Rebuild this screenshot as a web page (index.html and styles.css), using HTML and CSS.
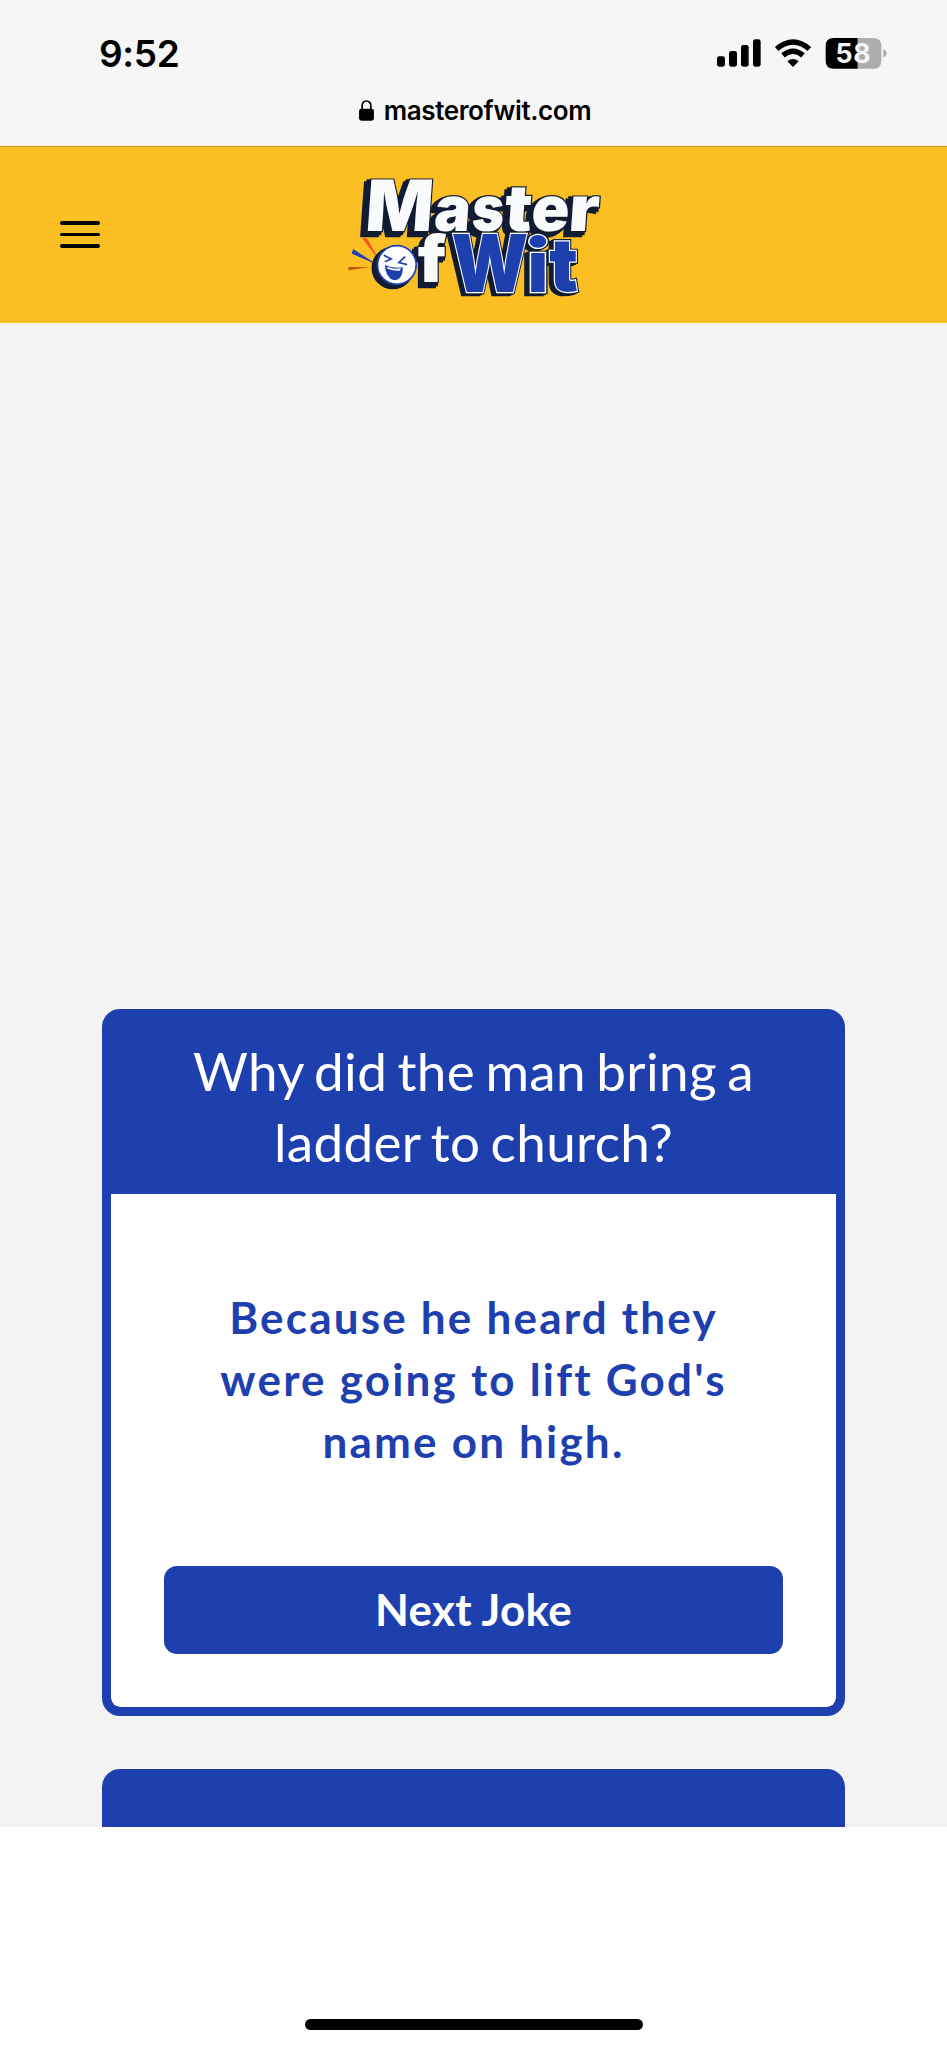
FILE: index.html
```html
<!DOCTYPE html>
<html lang="en">

<head>
    <meta charset="UTF-8">
    <meta name="viewport" content="width=device-width, initial-scale=1.0">
    <title>Master of Wit</title>
    <link rel="stylesheet" href="styles.css">
</head>

<body>
    <div class="browser-bar">
        <div class="status-row">
            <div class="clock">9:52</div>
            <svg class="status-icons" viewBox="0 0 510 96">
                <!-- signal -->
                <rect x="0" y="55" width="24" height="31" rx="7" />
                <rect x="36" y="39" width="24" height="47" rx="7" />
                <rect x="72" y="21" width="23" height="65" rx="7" />
                <rect x="108" y="4" width="23" height="82" rx="7" />
                <!-- wifi -->
                <g fill="none" stroke="#000" stroke-width="16">
                    <path d="M179 33 Q228 -9 277 33" />
                    <path d="M198 52 Q228 27 258 52" />
                </g>
                <path d="M211 70 Q228 56 245 70 L228 87 Z" />
                <!-- battery -->
                <path fill="#adadad" d="M422 0 H469 Q493 0 493 24 V68 Q493 92 469 92 H422 Z" />
                <path d="M422 0 H350 Q326 0 326 24 V68 Q326 92 350 92 H422 Z" />
                <path fill="#adadad" d="M499 34 Q509 37 509 46 Q509 55 499 58 Z" />
                <text class="battery-level" x="408" y="75" textLength="105">58</text>
            </svg>
        </div>
        <div class="address">
            <svg class="lock" viewBox="0 0 44 62">
                <path d="M9 30 V19 Q9 3 22 3 Q35 3 35 19 V30" fill="none" stroke="#000" stroke-width="5" />
                <rect x="0" y="26" width="44" height="35" rx="7" />
            </svg>
            <span>masterofwit.com</span>
        </div>
    </div>

    <header class="header">
        <button class="menu-btn" aria-label="Menu">
            <span class="menu-line"></span>
            <span class="menu-line"></span>
            <span class="menu-line"></span>
        </button>
        <svg class="logo" viewBox="-4.5 0 870 450">
            <defs>
                <g id="master" class="logo-text" transform="translate(11 0) skewX(-4)">
                    <text x="105" y="199" font-size="212" textLength="202" lengthAdjust="spacingAndGlyphs">M</text>
                    <text x="311" y="199" font-size="189" textLength="109" lengthAdjust="spacingAndGlyphs">a</text>
                    <text x="424" y="199" font-size="189" textLength="97" lengthAdjust="spacingAndGlyphs">s</text>
                    <text x="522" y="199" font-size="193" textLength="82" lengthAdjust="spacingAndGlyphs">t</text>
                    <text x="602" y="199" font-size="189" textLength="114" lengthAdjust="spacingAndGlyphs">e</text>
                    <text x="714" y="199" font-size="189" textLength="92" lengthAdjust="spacingAndGlyphs">r</text>
                </g>
                <g id="eff" class="logo-text">
                    <text x="262" y="350" font-size="195" textLength="86" lengthAdjust="spacingAndGlyphs">f</text>
                </g>
                <g id="wit" class="logo-text">
                    <text x="363" y="380" font-size="238" textLength="230" lengthAdjust="spacingAndGlyphs">W</text>
                    <text class="round-dot" x="584" y="380" font-size="226" textLength="76" lengthAdjust="spacingAndGlyphs">i</text>
                    <text x="656" y="377" font-size="222" textLength="86" lengthAdjust="spacingAndGlyphs">t</text>
                </g>
            </defs>

            <g class="shadow" aria-hidden="true">
                <use href="#master" x="-16" y="10" />
                <use href="#master" x="-8" y="5" />
                <use href="#eff" x="-12" y="12" />
                <use href="#eff" x="-6" y="6" />
            </g>
            <g class="white"><use href="#master" /><use href="#eff" /></g>
            <g class="shadow" aria-hidden="true">
                <use href="#wit" x="-12" y="8" />
                <use href="#wit" x="-6" y="4" />
                <use href="#wit" />
            </g>
            <g class="white-edge" aria-hidden="true"><use href="#wit" /></g>
            <g class="blue"><use href="#wit" /></g>

            <!-- laughing face -->
            <path d="M97 220 L109 222 L136 271 Z" fill="#f4511e" stroke="#f4511e" stroke-width="3" />
            <path d="M69 254 L65 265 L125 291 Z" fill="#1e40af" stroke="#1e40af" stroke-width="3" />
            <path d="M53 306 L119 306 L54 316 Z" fill="#c2570c" />
            <circle cx="187" cy="309" r="64" fill="#111c33" />
            <circle cx="199" cy="300" r="58" fill="#fff" stroke="#1e40af" stroke-width="5" />
            <g fill="none" stroke="#1e40af" stroke-width="5">
                <path d="M160 271 L182 282 L163 290" />
                <path d="M224 275 L205 293 L230 299" />
            </g>
            <path d="M163 300 Q190 312 217 307 Q217 345 191 346 Q166 340 163 300 Z" fill="#1e40af" />
            <path d="M170 305 Q190 314 211 310 L208 317 Q188 318 171 311 Z" fill="#fff" />
        </svg>
    </header>

    <main class="page">
        <div class="joke-card">
            <h2 class="question">Why did the man bring a ladder to church?</h2>
            <div class="joke-body">
                <p class="answer">Because he heard they were going to lift God's name on high.</p>
                <button class="next-btn">Next Joke</button>
            </div>
        </div>
        <div class="joke-card"></div>
    </main>

    <footer class="bottom-bar">
        <div class="home-indicator"></div>
    </footer>
</body>

</html>
```
FILE: styles.css
```css
* {
    margin: 0;
    padding: 0;
    box-sizing: border-box;
}

body {
    width: 947px;
    height: 2048px;
    display: flex;
    flex-direction: column;
    background: #fff;
    font-family: Lato, sans-serif;
    overflow: hidden;
}

.browser-bar {
    height: 147px;
    background: #f6f6f6;
    border-bottom: 1px solid #c4973a;
    font-family: Inter, sans-serif;
    color: #000;
}

.status-row {
    display: flex;
    justify-content: space-between;
    align-items: flex-start;
    height: 92px;
    padding: 32px 60px 0 99px;
}

.clock {
    font-size: 37px;
    font-weight: 600;
    line-height: 44px;
    letter-spacing: -0.3px;
}

.status-icons {
    width: 170px;
    height: 32px;
    margin-top: 6px;
}

.battery-level {
    font-size: 80px;
    font-weight: 700;
    fill: #f6f6f6;
    text-anchor: middle;
}

.address {
    display: flex;
    justify-content: center;
    align-items: center;
    gap: 10px;
    height: 36px;
    padding-left: 3px;
    font-size: 26px;
    font-weight: 600;
    letter-spacing: -0.4px;
}

.lock {
    width: 15px;
    height: 21px;
}

.header {
    display: grid;
    grid-template-columns: 1fr 290px 1fr;
    align-items: start;
    height: 176px;
    padding: 18px 60px 0;
    background: #fbbf24;
}

.menu-btn {
    display: flex;
    flex-direction: column;
    gap: 8px;
    width: 40px;
    margin-top: 56px;
    background: none;
    border: none;
}

.menu-line {
    width: 40px;
    height: 3.6px;
    border-radius: 2px;
    background: #000;
}

.logo {
    width: 290px;
    height: 150px;
}

.logo-text {
    font-family: Inter, sans-serif;
    font-weight: 900;
}

.round-dot {
    font-family: Lato, sans-serif;
}

.shadow {
    fill: #111c33;
    stroke: #111c33;
    stroke-width: 14px;
}

.white {
    fill: #f9fafb;
    stroke: #111c33;
    stroke-width: 7px;
    paint-order: stroke;
}

.white-edge {
    fill: #fff;
    stroke: #fff;
    stroke-width: 7px;
}

.blue {
    fill: #1e40af;
}

.page {
    display: flex;
    flex-direction: column;
    align-items: center;
    gap: 53px;
    height: 1504px;
    padding-top: 685.5px;
    background: #f3f3f3;
    overflow: hidden;
}

.joke-card {
    flex: none;
    width: 743px;
    min-height: 200px;
    background: #1e40af;
    border: 9px solid #1e40af;
    border-radius: 18px;
    overflow: hidden;
}

.question {
    padding: 17px 60px;
    font-size: 53px;
    font-weight: 400;
    line-height: 71px;
    letter-spacing: 0.35px;
    word-spacing: -3.6px;
    text-align: center;
    color: #fff;
}

.joke-body {
    display: flex;
    flex-direction: column;
    gap: 94px;
    height: 513px;
    padding: 92px 53px 53px;
    background: #fff;
    border-radius: 0 0 9px 9px;
}

.answer {
    padding: 0 35px;
    font-size: 44px;
    font-weight: 700;
    line-height: 62px;
    letter-spacing: 2.2px;
    text-align: center;
    color: #1e40af;
}

.next-btn {
    flex: none;
    height: 88px;
    padding-bottom: 2px;
    border: none;
    border-radius: 13px;
    background: #1e40af;
    color: #fff;
    font-family: inherit;
    font-size: 44px;
    font-weight: 700;
    letter-spacing: 0.3px;
}

.bottom-bar {
    display: flex;
    flex: 1;
    justify-content: center;
    align-items: flex-end;
    padding-bottom: 18px;
    background: #fff;
}

.home-indicator {
    width: 338px;
    height: 11px;
    border-radius: 6px;
    background: #000;
}
```
